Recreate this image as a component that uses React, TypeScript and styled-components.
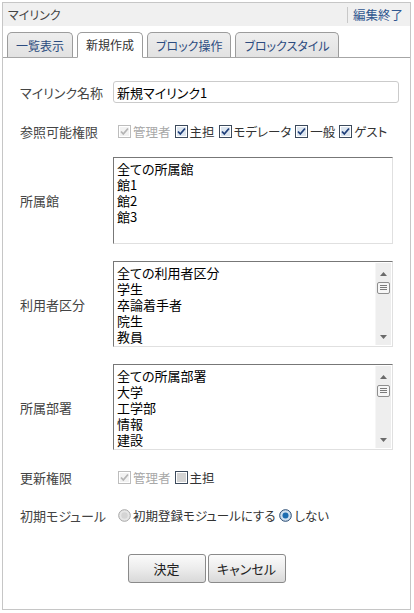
import React from "react";
import styled, { createGlobalStyle } from "styled-components";

const GlobalStyle = createGlobalStyle`
  body {
    margin: 0;
    background: #fff;
    font-family: "Noto Sans CJK JP", "Noto Sans", sans-serif;
    font-feature-settings: "palt";
    color: #444;
  }
`;

const tabs = ["一覧表示", "新規作成", "ブロック操作", "ブロックスタイル"];

const CheckBox: React.FC<{ checked?: boolean; disabled?: boolean }> = ({
  checked,
  disabled,
}) => {
  const border = disabled ? "#bdbdbd" : "#3c4a5c";
  const fill = disabled ? "#f2f2f2" : checked ? "#dde6f0" : "#d4d4d4";
  const mark = disabled ? "#b4b4b4" : "#1f3f7a";
  return (
    <StyledBoxIcon width="13" height="13" viewBox="0 0 13 13">
      <rect x="0.5" y="0.5" width="12" height="12" fill="#fff" stroke={border} />
      <rect x="2" y="2" width="9" height="9" fill={fill} />
      {checked && (
        <path
          d="M3 6.5 L5.3 9 L10 3.5"
          fill="none"
          stroke={mark}
          strokeWidth="1.8"
        />
      )}
    </StyledBoxIcon>
  );
};

const Radio: React.FC<{ checked?: boolean }> = ({ checked }) => (
  <StyledBoxIcon width="13" height="13" viewBox="0 0 13 13">
    <circle
      cx="6.5"
      cy="6.5"
      r="5.8"
      fill={checked ? "#cfe0f0" : "#e6e6e6"}
      stroke={checked ? "#24466e" : "#a6a6a6"}
    />
    {checked ? (
      <circle cx="6.5" cy="6.5" r="3" fill="#1d6cb0" />
    ) : (
      <circle cx="6.5" cy="6.5" r="3.2" fill="#d4d4d4" />
    )}
  </StyledBoxIcon>
);

const Scrollbar: React.FC = () => (
  <StyledScrollbar>
    <svg width="7" height="4" viewBox="0 0 7 4">
      <path d="M0 4 L3.5 0 L7 4 Z" fill="#6a6a6a" />
    </svg>
    <StyledThumb>
      <svg width="7" height="6" viewBox="0 0 7 6">
        <path d="M0 0.5 H7 M0 2.5 H7 M0 4.5 H7" stroke="#7a7a7a" />
      </svg>
    </StyledThumb>
    <StyledTrackFill />
    <svg width="7" height="4" viewBox="0 0 7 4">
      <path d="M0 0 L3.5 4 L7 0 Z" fill="#6a6a6a" />
    </svg>
  </StyledScrollbar>
);

const ListBox: React.FC<{ items: string[]; scroll?: boolean; h: number }> = ({
  items,
  scroll,
  h,
}) => (
  <StyledList h={h}>
    <StyledItems>
      {items.map((it) => (
        <StyledItem key={it}>{it}</StyledItem>
      ))}
    </StyledItems>
    {scroll && <Scrollbar />}
  </StyledList>
);

const App: React.FC = () => {
  return (
    <>
      <GlobalStyle />
      <StyledFrame>
        <StyledHeader>
          <StyledTitle>マイリンク</StyledTitle>
          <StyledEndLink>編集終了</StyledEndLink>
        </StyledHeader>

        <StyledTabBar>
          {tabs.map((t, i) => (
            <StyledTab key={t} active={i === 1}>
              {t}
            </StyledTab>
          ))}
        </StyledTabBar>

        <StyledForm>
          <StyledRow mt={23}>
            <StyledLabel>マイリンク名称</StyledLabel>
            <StyledInput defaultValue="新規マイリンク1" />
          </StyledRow>

          <StyledRow mt={18} h={20}>
            <StyledLabel>参照可能権限</StyledLabel>
            <StyledChecks>
              <StyledOption disabled>
                <CheckBox checked disabled />
                管理者
              </StyledOption>
              <StyledOption>
                <CheckBox checked />
                主担
              </StyledOption>
              <StyledOption>
                <CheckBox checked />
                モデレータ
              </StyledOption>
              <StyledOption>
                <CheckBox checked />
                一般
              </StyledOption>
              <StyledOption>
                <CheckBox checked />
                ゲスト
              </StyledOption>
            </StyledChecks>
          </StyledRow>

          <StyledRow mt={16}>
            <StyledLabel>所属館</StyledLabel>
            <ListBox h={87} items={["全ての所属館", "館1", "館2", "館3"]} />
          </StyledRow>

          <StyledRow mt={17}>
            <StyledLabel>利用者区分</StyledLabel>
            <ListBox
              h={86}
              scroll
              items={["全ての利用者区分", "学生", "卒論着手者", "院生", "教員"]}
            />
          </StyledRow>

          <StyledRow mt={17}>
            <StyledLabel>所属部署</StyledLabel>
            <ListBox
              h={86}
              scroll
              items={["全ての所属部署", "大学", "工学部", "情報", "建設"]}
            />
          </StyledRow>

          <StyledRow mt={17} h={20}>
            <StyledLabel>更新権限</StyledLabel>
            <StyledChecks>
              <StyledOption disabled>
                <CheckBox checked disabled />
                管理者
              </StyledOption>
              <StyledOption>
                <CheckBox />
                主担
              </StyledOption>
            </StyledChecks>
          </StyledRow>

          <StyledRow mt={18} h={20}>
            <StyledLabel>初期モジュール</StyledLabel>
            <StyledChecks>
              <StyledOption>
                <Radio />
                初期登録モジュールにする
              </StyledOption>
              <StyledOption>
                <Radio checked />
                しない
              </StyledOption>
            </StyledChecks>
          </StyledRow>

          <StyledButtons>
            <StyledButton>決定</StyledButton>
            <StyledButton>キャンセル</StyledButton>
          </StyledButtons>
        </StyledForm>
      </StyledFrame>
    </>
  );
};

export default App;

const StyledFrame = styled.div`
  box-sizing: border-box;
  margin: 2px 0 0 2px;
  width: 409px;
  height: 608px;
  border: 1px solid #c6c6c6;
  display: flex;
  flex-direction: column;
`;

const StyledHeader = styled.div`
  display: flex;
  align-items: center;
  justify-content: space-between;
  height: 23px;
  padding: 0 7px 0 5px;
  background: #f0f0f0;
`;

const StyledTitle = styled.div`
  font-size: 12px;
  color: #444;
`;

const StyledEndLink = styled.a`
  display: flex;
  align-items: center;
  height: 16px;
  padding-left: 5px;
  border-left: 1px solid #c8c8c8;
  font-size: 12.5px;
  color: #2f568f;
  cursor: pointer;
`;

const StyledTabBar = styled.div`
  display: flex;
  align-items: flex-end;
  gap: 4px;
  margin-top: 6px;
  padding-left: 4px;
  border-bottom: 1px solid #a6a6a6;
`;

const StyledTab = styled.div<{ active?: boolean }>`
  box-sizing: border-box;
  display: flex;
  align-items: center;
  padding: 0 8px;
  margin-bottom: ${(p) => (p.active ? "-1px" : "0")};
  height: ${(p) => (p.active ? "26px" : "25px")};
  border: 1px solid #9c9c9c;
  border-bottom: ${(p) => (p.active ? "1px solid #fff" : "none")};
  border-radius: 5px 5px 0 0;
  background: ${(p) =>
    p.active ? "#fff" : "linear-gradient(#eeeeee, #e2e2e2)"};
  color: ${(p) => (p.active ? "#333" : "#2c4c80")};
  font-size: 12px;
  padding-bottom: ${(p) => (p.active ? "1px" : "0")};
`;

const StyledForm = styled.div`
  display: flex;
  flex-direction: column;
  padding-left: 17px;
`;

const StyledRow = styled.div<{ mt: number; h?: number }>`
  display: flex;
  align-items: center;
  margin-top: ${(p) => p.mt}px;
  height: ${(p) => (p.h ? p.h + "px" : "auto")};
`;

const StyledLabel = styled.div`
  width: 93px;
  flex-shrink: 0;
  font-size: 13px;
  color: #444;
`;

const StyledInput = styled.input`
  box-sizing: border-box;
  width: 286px;
  height: 22px;
  padding: 0 3px;
  border: 1px solid #cbcbcb;
  border-radius: 3px;
  font-family: inherit;
  font-feature-settings: "palt";
  font-size: 13px;
  color: #000;
  outline: none;
`;

const StyledChecks = styled.div`
  display: flex;
  align-items: center;
  gap: 4px;
  padding-left: 5px;
`;

const StyledOption = styled.label<{ disabled?: boolean }>`
  display: flex;
  align-items: center;
  gap: 2px;
  font-size: 12.5px;
  color: ${(p) => (p.disabled ? "#a8a8a8" : "#333")};
`;

const StyledBoxIcon = styled.svg`
  flex-shrink: 0;
`;

const StyledList = styled.div<{ h: number }>`
  box-sizing: border-box;
  display: flex;
  width: 280px;
  height: ${(p) => p.h}px;
  border: 1px solid;
  border-color: #777 #e0e0e0 #e0e0e0 #777;
`;

const StyledItems = styled.div`
  flex: 1;
  padding: 3px 0 0 3px;
  overflow: hidden;
`;

const StyledItem = styled.div`
  font-size: 13px;
  line-height: 16px;
  color: #000;
  white-space: nowrap;
`;

const StyledScrollbar = styled.div`
  display: flex;
  flex-direction: column;
  align-items: center;
  width: 16px;
  margin: 1px;
  padding: 9px 0 6px;
  box-sizing: border-box;
  background: #eeeeee;
  border-left: 1px solid #f6f6f6;
`;

const StyledThumb = styled.div`
  box-sizing: border-box;
  display: flex;
  align-items: center;
  justify-content: center;
  width: 13px;
  height: 12px;
  margin-top: 6px;
  border: 1px solid #8e8e8e;
  border-radius: 2px;
  background: #f6f6f6;
`;

const StyledTrackFill = styled.div`
  flex: 1;
`;

const StyledButtons = styled.div`
  display: flex;
  justify-content: center;
  gap: 2px;
  margin-top: 29px;
  margin-left: -17px;
`;

const StyledButton = styled.button`
  box-sizing: border-box;
  width: 78px;
  height: 29px;
  border: 1px solid #8a8a8a;
  border-radius: 3px;
  background: linear-gradient(#fbfbfb, #ececec 50%, #d9d9d9);
  font-family: inherit;
  font-feature-settings: "palt";
  font-size: 13px;
  color: #222;
  cursor: pointer;
`;
